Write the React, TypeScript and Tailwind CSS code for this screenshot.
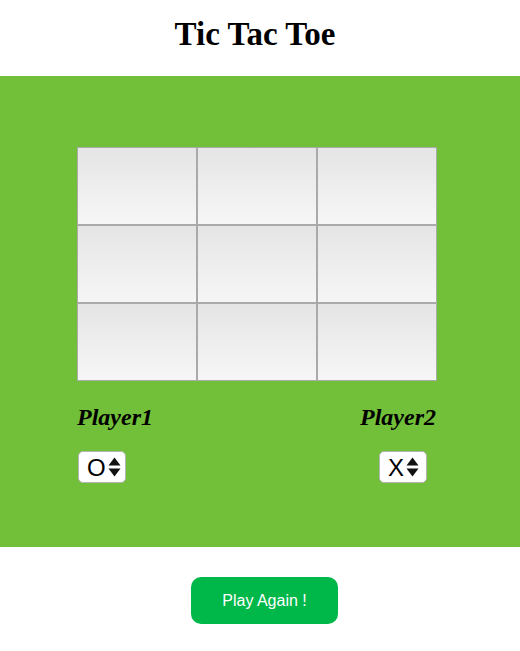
import React from "react";

const Arrows = () => (
  <svg width="13" height="20" viewBox="0 0 13 20" className="ml-[2px]">
    <path d="M6.5 0.5 L12.5 8.5 L0.5 8.5 Z" fill="#111" />
    <path d="M6.5 19.5 L12.5 11.5 L0.5 11.5 Z" fill="#111" />
  </svg>
);

const Select = ({ value }: { value: string }) => (
  <div className="flex h-[32px] w-[48px] items-center rounded-[5px] border border-[#b4b4b4] bg-white pl-[8px] text-[24px] leading-none text-black" style={{ fontFamily: '"Liberation Sans", Arial, sans-serif' }}>
    <span className="mt-[1px]">{value}</span>
    <Arrows />
  </div>
);

export default function App() {
  const cells = Array.from({ length: 9 });
  return (
    <div className="w-[520px] bg-white">
      <div className="flex h-[76px] items-center justify-center">
        <h1 className="mr-[10px] mt-[-6px] text-[33px] font-bold text-black" style={{ fontFamily: '"Liberation Serif", "Times New Roman", serif' }}>
          Tic Tac Toe
        </h1>
      </div>
      <div className="h-[471px] bg-[#72bf3a] pt-[71px]">
        <div className="ml-[77px] w-[360px]">
          <div className="grid grid-cols-3">
            {cells.map((_, i) => (
              <div key={i} className="h-[78px] border border-[#aaaaaa] bg-gradient-to-b from-[#e5e5e5] to-[#f6f6f6]" />
            ))}
          </div>
          <div className="mt-[21px] flex justify-between text-[24px] font-bold italic leading-[30px] text-black" style={{ fontFamily: '"Liberation Serif", "Times New Roman", serif' }}>
            <span>Player1</span>
            <span className="mr-[1px]">Player2</span>
          </div>
          <div className="mt-[19px] flex justify-between">
            <div className="ml-[1px]"><Select value="O" /></div>
            <div className="mr-[10px]"><Select value="X" /></div>
          </div>
        </div>
      </div>
      <div className="pt-[30px]">
        <button className="ml-[191px] h-[47px] w-[147px] rounded-[10px] bg-[#00b74a] text-[16px] text-white" style={{ fontFamily: '"Liberation Sans", Arial, sans-serif' }}>
          Play Again !
        </button>
      </div>
    </div>
  );
}
